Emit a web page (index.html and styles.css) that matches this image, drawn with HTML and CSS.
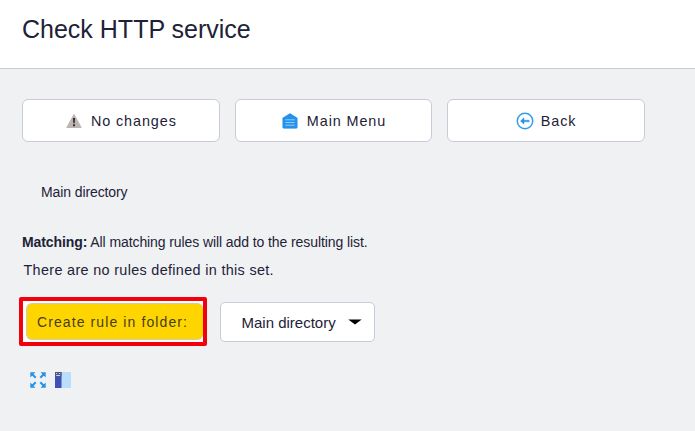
FILE: index.html
```html
<!DOCTYPE html>
<html lang="en">
<head>
<meta charset="utf-8">
<title>Check HTTP service</title>
<link rel="stylesheet" href="styles.css">
</head>
<body>
<header class="header"><h1 class="title">Check HTTP service</h1></header>
<main class="content">
  <nav class="actions">
    <a class="button">
      <svg class="icon" width="16" height="16" viewBox="0 0 16 16"><path d="M8 1.5 15.2 14.5H.8z" fill="#bdb5b4" stroke="#bdb5b4" stroke-linejoin="round"/><path d="M6.9 5h2.2l-.4 5.2H7.3zM7 11.3h2v2H7z" fill="#332e30"/></svg>
      <span>No changes</span>
    </a>
    <a class="button">
      <svg class="icon" width="16" height="16" viewBox="0 0 16 16"><path d="M8 .6 15.2 5v9.3a1 1 0 0 1-1 1H1.8a1 1 0 0 1-1-1V5z" fill="#2492eb" stroke="#2492eb" stroke-width=".6" stroke-linejoin="round"/><path d="M3.3 6.8h9.4M3.3 9.5h9.4M3.3 12.2h9.4" stroke="#8fcdfb" stroke-width="1"/></svg>
      <span>Main Menu</span>
    </a>
    <a class="button back">
      <svg class="icon" width="18" height="18" viewBox="0 0 18 18"><circle cx="9" cy="9" r="7.7" fill="none" stroke="#329ceb" stroke-width="1.5"/><path d="M4.5 9 8 5.8v2.4h5.2v1.6H8v2.4z" fill="#2492eb" stroke="#2492eb" stroke-width=".4"/></svg>
      <span>Back</span>
    </a>
  </nav>
  <p class="folder">Main directory</p>
  <p class="matching"><b>Matching:</b> All matching rules will add to the resulting list.</p>
  <p class="empty">There are no rules defined in this set.</p>
  <div class="create-row">
    <div class="highlight"><button class="create">Create rule in folder:</button></div>
    <div class="select"><span>Main directory</span><svg width="14" height="6" viewBox="0 0 14 6"><path d="M.3.5h13.4L7 5.5z" fill="#000"/></svg></div>
  </div>
  <div class="tools">
    <svg width="16" height="16" viewBox="0 0 16 16" fill="#2492eb" stroke="#2492eb" stroke-width="2"><path d="M.3 5.5V.3h5.2zM10.5.3h5.2v5.2zM.3 10.5v5.2h5.2zM10.5 15.7h5.2v-5.2z" stroke="none"/><path d="m2 2 3.7 3.7M14 2l-3.7 3.7M2 14l3.7-3.7M14 14l-3.7-3.7"/></svg>
    <svg width="16" height="16" viewBox="0 0 16 16"><path d="M0 0h16v16H0z" fill="#bbdefb"/><path d="M0 0h6.5v16H0z" fill="#3f51b5"/><path d="M0 0h6.5v4.5H0z" fill="#53597e"/><path d="M1 1.5h1.2M4 1.5h1.2M1.2 3.5h4" stroke="#c9cee8"/></svg>
  </div>
</main>
</body>
</html>
```

FILE: styles.css
```css
* { box-sizing: border-box; }
body {
  margin: 0;
  min-height: 431px;
  background: #f0f1f3;
  color: #1d2238;
  font: 14px/20px "Liberation Sans", Arial, sans-serif;
}
.header {
  height: 69px;
  padding: 14px 22px;
  background: #fff;
  border-bottom: 1px solid #c9cbd8;
}
.title { margin: 0; font-size: 25px; font-weight: 400; line-height: 30px; }
.content { padding: 30px 50px 0 22px; }
.actions { display: grid; grid-template-columns: repeat(3, 1fr); gap: 15px; }
.button {
  display: flex;
  align-items: center;
  justify-content: center;
  gap: 9px;
  height: 43px;
  padding-left: 1px;
  background: #fff;
  border: 1px solid #c9cbd8;
  border-radius: 6px;
  font-size: 14.4px;
  letter-spacing: .9px;
}
.back { gap: 7px; padding-left: 0; }
p { margin: 0; }
.folder { margin-top: 40px; padding-left: 19px; letter-spacing: -.1px; }
.matching { margin-top: 30px; letter-spacing: -.09px; }
.empty { margin-top: 8px; padding-left: 1.5px; font-size: 14.4px; letter-spacing: .33px; }
.create-row { display: flex; align-items: center; gap: 13px; margin: 17px 0 0 -3px; }
.highlight {
  width: 188px;
  height: 49px;
  padding: 2px 0 2px 3px;
  background: #fff;
  border: 4px solid #f3000d;
  border-radius: 2px;
}
.create {
  display: block;
  width: 100%;
  height: 37px;
  padding: 0 0 0 10px;
  background: #ffd500;
  border: 1px solid #d2cba8;
  border-right: 0;
  border-radius: 6px;
  color: #453d20;
  font: 14px "Liberation Sans", Arial, sans-serif;
  letter-spacing: 1.1px;
  text-align: left;
  white-space: nowrap;
}
.select {
  display: flex;
  align-items: center;
  justify-content: space-between;
  width: 155px;
  height: 40px;
  padding: 2px 12px 0 20.5px;
  background: #fff;
  border: 1px solid #c9cbd8;
  border-radius: 5px;
  font-size: 15px;
}
.select svg { margin-top: -2px; }
.tools { display: flex; gap: 9px; margin: 26px 0 0 8px; }
```
